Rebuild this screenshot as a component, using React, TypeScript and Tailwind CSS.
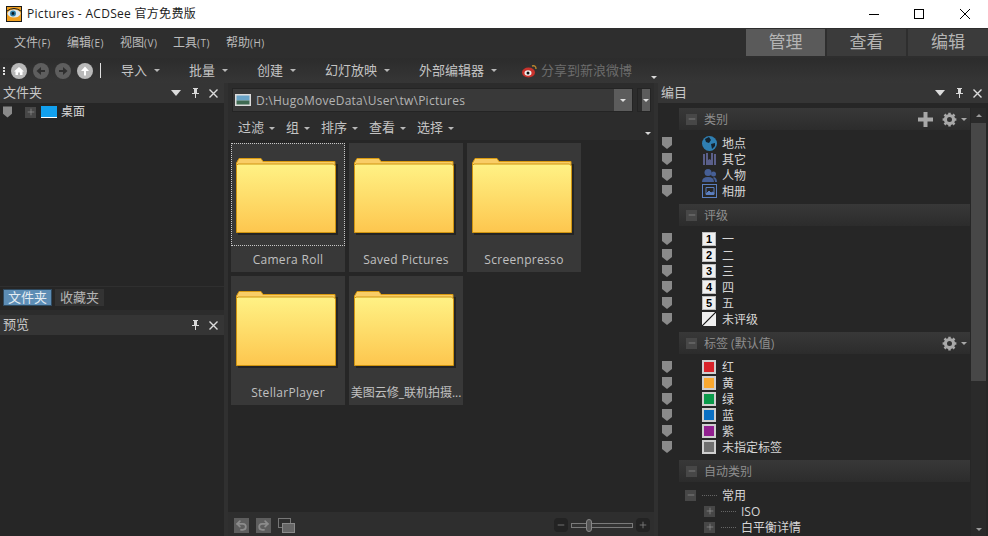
import { Minus, Plus, Redo2, Undo2 } from "lucide-react";

const font = "font-['Open_Sans','Noto_Sans_CJK_SC',sans-serif]";

function Caret({ className = "border-t-[#b8b8b8]" }: { className?: string }) {
  return <span className={`inline-block h-0 w-0 border-x-[3px] border-t-[3px] border-x-transparent ${className}`} />;
}

function PaneControls({ menu = true }: { menu?: boolean }) {
  return (
    <div className="flex items-center gap-[9px]">
      {menu && <span className="mr-px h-0 w-0 border-x-[5px] border-t-[6px] border-x-transparent border-t-[#dcdcdc]" />}
      <svg width="9" height="10" viewBox="0 0 9 10" fill="#d8d8d8">
        <path d="M2 0h5v1H6v4h2v1H5v4H4V6H1V5h2V1H2z" />
      </svg>
      <svg width="9" height="9" viewBox="0 0 9 9" stroke="#dcdcdc" strokeWidth="1.4">
        <path d="M0.500 0.500 8.500 8.500M8.500 0.500 0.500 8.500" />
      </svg>
    </div>
  );
}

function PaneHeader({ title, menu = true }: { title: string; menu?: boolean }) {
  return (
    <div className="flex h-[20px] shrink-0 items-center justify-between bg-[#353535] pl-[3px] pr-[6px] text-[13px] text-[#c8c8c8]">
      <span>{title}</span>
      <PaneControls menu={menu} />
    </div>
  );
}

function NavButton({ dim, d }: { dim?: boolean; d: string }) {
  return (
    <span className={`flex h-[16px] w-[16px] items-center justify-center rounded-full ${dim ? "bg-[#5e5e5e]" : "bg-[#b9b9b9]"}`}>
      <svg width="10" height="10" viewBox="0 0 10 10" fill={dim ? "#2f2f2f" : "#fff"}>
        <path d={d} />
      </svg>
    </span>
  );
}

function ToolItem({ label, className = "" }: { label: string; className?: string }) {
  return (
    <span className={`flex items-center gap-[7px] text-[13px] text-[#c4c4c4] ${className}`}>
      {label}
      <Caret />
    </span>
  );
}

function Folder({ label, focused, tight }: { label: string; focused?: boolean; tight?: boolean }) {
  return (
    <div className="relative flex h-[129px] w-[114px] flex-col bg-[#383838]">
      <div className={`h-[103px] border border-dotted ${focused ? "border-[#c8c8c8]" : "border-transparent"} px-[3px] pt-[13px]`}>
        <svg width="104" height="80" viewBox="0 0 104 80">
          <defs>
            <linearGradient id="folderFill" x1="0" y1="0" x2="0" y2="1">
              <stop offset="0" stopColor="#fff285" />
              <stop offset="1" stopColor="#fdc64e" />
            </linearGradient>
          </defs>
          <rect x="3" y="7" width="100" height="71" fill="#1c1c1c" opacity="0.7" />
          <path d="M1.500 6 L4 1.500 H26 L28 4.500 H100 V75 H1.500 Z" fill="#f9cd66" stroke="#d99a10" />
          <path d="M1.500 8.500 L3 7 H98.500 L100.500 9 V75.500 H1.500 Z" fill="url(#folderFill)" stroke="#cf9410" />
        </svg>
      </div>
      <div className={`flex flex-1 items-center justify-center overflow-hidden whitespace-nowrap pt-px text-[12px] text-[#c0c0c0] ${tight ? "" : "tracking-[0.3px]"}`}>
        {label}
      </div>
    </div>
  );
}

function Flag() {
  return (
    <svg width="10" height="12" viewBox="0 0 10 12" fill="#8a8a8a">
      <path d="M0 0h10v8l-5 4-5-4z" />
    </svg>
  );
}

function SmallBox({ plus, className = "" }: { plus?: boolean; className?: string }) {
  return (
    <span className={`flex h-[11px] w-[11px] shrink-0 items-center justify-center bg-[#474747] text-[#9a9a9a] ${className}`}>
      {plus ? <Plus size={10} strokeWidth={1.5} /> : <Minus size={10} strokeWidth={1.5} />}
    </span>
  );
}

function Gear() {
  return (
    <svg width="15" height="15" viewBox="0 0 24 24" fill="none" stroke="#a8a8a8">
      <circle cx="12" cy="12" r="6.500" strokeWidth="5" />
      <path d="M12 1v5M12 18v5M1 12h5M18 12h5M4 4l3.500 3.500M16.500 16.500 20 20M4 20l3.500-3.500M16.500 7.500 20 4" strokeWidth="4" />
    </svg>
  );
}

function Section({ title, add, gear }: { title: string; add?: boolean; gear?: boolean }) {
  return (
    <div className="ml-[21px] flex h-[22px] items-center bg-gradient-to-b from-[#383838] to-[#2c2c2c] pl-[7px] pr-[3px] text-[12px] text-[#8e8e8e]">
      <SmallBox />
      <span className="ml-[7px] flex-1 pt-[2px]">{title}</span>
      {add && (
        <svg width="15" height="15" viewBox="0 0 15 15" fill="#a8a8a8" className="mr-[9px]">
          <path d="M5.500 0h4v5.500H15v4H9.500V15h-4V9.500H0v-4h5.500z" />
        </svg>
      )}
      {gear && <Gear />}
      {gear && <Caret className="ml-[4px] border-t-[#a8a8a8]" />}
    </div>
  );
}

function Row({ icon, label }: { icon: React.ReactNode; label: string }) {
  return (
    <div className="flex h-[16px] items-center text-[12px] text-[#d6d6d6]">
      <span className="ml-[4px] flex w-[40px] shrink-0"><Flag /></span>
      <span className="flex w-[14px] shrink-0 items-center justify-center">{icon}</span>
      <span className="ml-[6px] pt-[2px]">{label}</span>
    </div>
  );
}

function RatingBox({ n }: { n: string }) {
  return (
    <span className="flex h-[14px] w-[14px] items-center justify-center border border-[#bdbdbd] bg-[#efefef] font-['Liberation_Sans',sans-serif] text-[11px] font-bold leading-none text-black">
      {n}
    </span>
  );
}

function ColorBox({ className }: { className: string }) {
  return <span className={`h-[14px] w-[14px] border-2 border-[#cfcfcf] ${className}`} />;
}

function TreeRow({ indent, label, plus }: { indent: string; label: string; plus?: boolean }) {
  return (
    <div className={`flex h-[16px] items-center ${indent}`}>
      <SmallBox plus={plus} />
      <span className="ml-[6px] w-[15px] border-t border-dotted border-[#666]" />
      <span className="ml-[5px] pt-[2px]">{label}</span>
    </div>
  );
}

export default function App() {
  return (
    <div className={`flex h-[536px] w-[988px] flex-col overflow-hidden bg-[#2a2a2a] ${font}`}>
      {/* title bar */}
      <div className="flex h-[28px] shrink-0 items-center bg-white pl-[6px]">
        <svg width="16" height="16" viewBox="0 0 16 16">
          <rect width="16" height="16" fill="#1a1a1a" />
          <rect x="1" y="1" width="14" height="14" fill="#f0a020" />
          <ellipse cx="8" cy="7.500" rx="6.500" ry="4" fill="#dfe8ee" />
          <circle cx="7" cy="7.500" r="3" fill="#2f7fa8" />
          <circle cx="7" cy="7.500" r="1.400" fill="#0b1a22" />
          <path d="M1 5q7-5 14 0" stroke="#1a1a1a" fill="none" />
        </svg>
        <span className="ml-[5px] flex-1 text-[12px] tracking-[0.3px] text-[#1c1c1c]">Pictures - ACDSee 官方免费版</span>
        <svg width="10" height="10" viewBox="0 0 10 10" stroke="#000" fill="none" className="mr-[35px]">
          <path d="M0 5.500h10" />
        </svg>
        <svg width="10" height="10" viewBox="0 0 10 10" stroke="#000" fill="none" className="mr-[36px]">
          <rect x="0.500" y="0.500" width="9" height="9" />
        </svg>
        <svg width="10" height="10" viewBox="0 0 10 10" stroke="#000" fill="none" className="mr-[18px]">
          <path d="M0 0 10 10M10 0 0 10" />
        </svg>
      </div>

      {/* menu bar */}
      <div className="flex h-[30px] shrink-0 items-center justify-between bg-[#2e2e2e] pl-[14px]">
        <div className="flex text-[12px] text-[#bcbcbc]">
          {["文件", "编辑", "视图", "工具", "帮助"].map((m, i) => (
            <span key={m} className="w-[53px]">
              {m}
              <span className="text-[10px] tracking-[0.5px]">({["F", "E", "V", "T", "H"][i]})</span>
            </span>
          ))}
        </div>
        <div className="flex h-[28px] gap-[2px] self-start pt-px text-[17px] text-[#b4b4b4]">
          <span className="flex w-[79px] items-center justify-center bg-[#5a5a5a] pb-[2px]">管理</span>
          <span className="flex w-[79px] items-center justify-center bg-[#3b3b3b] pb-[2px]">查看</span>
          <span className="flex w-[80px] items-center justify-center bg-[#3b3b3b] pb-[2px]">编辑</span>
        </div>
      </div>

      {/* toolbar */}
      <div className="flex h-[25px] shrink-0 items-center bg-gradient-to-b from-[#2c2c2c] to-[#363636] pl-[3px]">
        <span className="mr-[6px] flex flex-col gap-px">
          <span className="h-[2px] w-[2px] bg-[#ddd]" />
          <span className="h-[2px] w-[2px] bg-[#ddd]" />
          <span className="h-[2px] w-[2px] bg-[#ddd]" />
        </span>
        <div className="flex gap-[6px]">
          <NavButton d="M5 1 10 5.500H8.500V9H6V6.500H4V9H1.500V5.500H0Z" />
          <NavButton dim d="M5 1v3h4v2H5v3L0.500 5Z" />
          <NavButton dim d="M5 1v3H1v2h4v3l4.500-4Z" />
          <NavButton d="M1 5 5 0.500 9 5H6v4.500H4V5Z" />
        </div>
        <span className="ml-[7px] h-[15px] w-px bg-[#e0e0e0]" />
        <ToolItem label="导入" className="ml-[20px]" />
        <ToolItem label="批量" className="ml-[29px]" />
        <ToolItem label="创建" className="ml-[29px]" />
        <ToolItem label="幻灯放映" className="ml-[29px]" />
        <ToolItem label="外部编辑器" className="ml-[29px]" />
        <span className="ml-[25px] flex items-center gap-[3px] text-[13px] text-[#6c6c6c]">
          <svg width="16" height="14" viewBox="0 0 16 14">
            <ellipse cx="6.500" cy="8.500" rx="6.500" ry="5" fill="#c8322c" />
            <ellipse cx="6" cy="9" rx="3.500" ry="2.800" fill="#eee" />
            <circle cx="6" cy="9" r="1.500" fill="#111" />
            <path d="M10 2q4-1 4 3" stroke="#b8862e" strokeWidth="1.400" fill="none" />
          </svg>
          分享到新浪微博
        </span>
        <Caret className="ml-[19px] mt-[14px] border-t-[#d8d8d8]" />
      </div>

      {/* panes */}
      <div className="flex min-h-0 flex-1">
        {/* left */}
        <div className="flex w-[224px] shrink-0 flex-col bg-[#262626]">
          <PaneHeader title="文件夹" />
          <div className="flex h-[18px] items-center pl-[3px] text-[12px] text-[#d6d6d6]">
            <svg width="9" height="12" viewBox="0 0 10 12" fill="#8a8a8a">
              <path d="M0 0h10v8l-5 4-5-4z" />
            </svg>
            <SmallBox plus className="ml-[13px]" />
            <span className="ml-[5px] h-[12px] w-[16px] border-b border-b-white bg-[#12a0ee]" />
            <span className="ml-[4px]">桌面</span>
          </div>
          <div className="flex-1" />
          <div className="flex h-[24px] items-center gap-[3px] border-t border-[#2f2f2f] pb-[2px] pl-[3px] text-[13px]">
            <span className="flex h-[17px] w-[49px] items-center justify-center border border-[#2f4a60] bg-[#5d8db5] text-[#e4ecf2]">文件夹</span>
            <span className="flex h-[17px] w-[49px] items-center justify-center bg-[#333] text-[#b4b4b4]">收藏夹</span>
          </div>
          <div className="h-[5px] bg-[#2c2c2c]" />
          <PaneHeader title="预览" menu={false} />
          <div className="h-[201px]" />
        </div>

        <div className="w-[4px] shrink-0 bg-[#303030]" />

        {/* center */}
        <div className="flex w-[426px] shrink-0 flex-col bg-[#262626]">
          <div className="h-[5px] bg-[#2c2c2c]" />
          <div className="flex h-[24px] shrink-0 items-stretch gap-[4px] bg-[#2c2c2c] pl-[4px] pr-[3px]">
            <div className="flex flex-1 items-center border border-[#242424] bg-[#393939]">
              <svg width="16" height="12" viewBox="0 0 16 12" className="ml-[2px]">
                <rect width="16" height="12" fill="#ddd" />
                <rect x="1.500" y="1.500" width="13" height="5" fill="#6aa4c8" />
                <rect x="1.500" y="6.500" width="13" height="4" fill="#3f6a52" />
              </svg>
              <span className="ml-[5px] flex-1 pt-[2px] text-[12px] tracking-[0.25px] text-[#b4b4b4]">D:\HugoMoveData\User\tw\Pictures</span>
              <span className="flex h-full w-[18px] items-center justify-center bg-[#5c5c5c]">
                <Caret className="border-t-[#e0e0e0]" />
              </span>
            </div>
            <div className="flex w-[14px] justify-end border border-[#242424] bg-[#2c2c2c]">
              <span className="flex w-[8px] items-center justify-center bg-[#5c5c5c]">
                <Caret className="border-t-[#e0e0e0]" />
              </span>
            </div>
          </div>
          <div className="flex h-[28px] shrink-0 items-center gap-[11px] bg-[#2c2c2c] pl-[10px] pt-[4px] text-[13px] text-[#c4c4c4]">
            {["过滤", "组", "排序", "查看", "选择"].map((t) => (
              <span key={t} className="flex items-center gap-[5px]">
                {t}
                <Caret />
              </span>
            ))}
            <Caret className="ml-auto mr-[3px] mt-[10px] border-t-[#d8d8d8]" />
          </div>
          <div className="flex flex-1 flex-wrap content-start gap-x-[4px] gap-y-[4px] pl-[3px] pt-[3px]">
            <Folder label="Camera Roll" focused />
            <Folder label="Saved Pictures" />
            <Folder label="Screenpresso" />
            <Folder label="StellarPlayer" />
            <Folder label="美图云修_联机拍摄..." tight />
          </div>
          <div className="flex h-[24px] shrink-0 items-center bg-[#2e2e2e] pl-[6px] pr-[4px] pt-[2px]">
            <span className="flex h-[15px] w-[15px] items-center justify-center bg-[#5e5e5e] text-[#8c8c8c]">
              <Undo2 size={13} strokeWidth={3.2} />
            </span>
            <span className="ml-[7px] flex h-[15px] w-[15px] items-center justify-center bg-[#5e5e5e] text-[#8c8c8c]">
              <Redo2 size={13} strokeWidth={3.2} />
            </span>
            <span className="relative ml-[7px] h-[15px] w-[17px]">
              <span className="absolute left-0 top-0 h-[10px] w-[13px] border border-[#777]" />
              <span className="absolute bottom-0 right-0 h-[10px] w-[13px] border border-[#8a8a8a] bg-[#666]" />
            </span>
            <span className="ml-auto flex h-[14px] w-[14px] items-center justify-center rounded-sm bg-[#232323] text-[#808080]">
              <Minus size={10} />
            </span>
            <span className="relative mx-[3px] h-[5px] w-[62px] border border-[#7a7a7a] bg-[#333]">
              <span className="absolute left-[14px] top-[-5px] h-[13px] w-[6px] rounded-sm border border-[#888] bg-[#555]" />
            </span>
            <span className="flex h-[14px] w-[14px] items-center justify-center rounded-sm bg-[#232323] text-[#808080]">
              <Plus size={10} />
            </span>
          </div>
        </div>

        <div className="w-[4px] shrink-0 bg-[#303030]" />

        {/* right */}
        <div className="flex min-w-0 flex-1 flex-col bg-[#262626]">
          <PaneHeader title="编目" />
          <div className="flex min-h-0 flex-1 pt-[5px]">
            <div className="min-w-0 flex-1 overflow-hidden">
              <Section title="类别" add gear />
              <div className="py-[5px]">
                <Row label="地点" icon={
                  <svg width="15" height="15" viewBox="0 0 15 15" className="shrink-0">
                    <circle cx="7.500" cy="7.500" r="7.500" fill="#2f7fb2" />
                    <path d="M3 3l4-2 2 3-2 3-3-1zM9 8l4-1 0 3-3 3z" fill="#14232e" />
                  </svg>
                } />
                <Row label="其它" icon={
                  <svg width="13" height="13" viewBox="0 0 13 13" fill="#5a5f8a" className="shrink-0">
                    <path d="M0 1h2v11H0zM3 0h7v12H3zM11 1h2v11h-2z" />
                    <path d="M5 0h3v7l-1.500-1L5 7z" fill="#262626" />
                  </svg>
                } />
                <Row label="人物" icon={
                  <svg width="15" height="13" viewBox="0 0 15 13" fill="#465f96" className="shrink-0">
                    <circle cx="6" cy="3.500" r="3.500" />
                    <circle cx="11.500" cy="5" r="2.500" />
                    <path d="M0 13q0-5 6-5t6 5zM12 8q3 1 3 5h-2q0-3-2-4z" />
                  </svg>
                } />
                <Row label="相册" icon={
                  <svg width="15" height="14" viewBox="0 0 15 14" fill="none" stroke="#5b7fc0" className="shrink-0">
                    <rect x="0.500" y="0.500" width="14" height="13" />
                    <path d="M4 3.500h8v7H4z" />
                    <path d="M4 10l3-3 2 2 2-1 1 2z" fill="#5b7fc0" />
                  </svg>
                } />
              </div>
              <Section title="评级" />
              <div className="py-[5px]">
                <Row label="一" icon={<RatingBox n="1" />} />
                <Row label="二" icon={<RatingBox n="2" />} />
                <Row label="三" icon={<RatingBox n="3" />} />
                <Row label="四" icon={<RatingBox n="4" />} />
                <Row label="五" icon={<RatingBox n="5" />} />
                <Row label="未评级" icon={
                  <svg width="14" height="14" viewBox="0 0 14 14" className="shrink-0">
                    <rect width="14" height="14" fill="#efefef" />
                    <path d="M0 14 14 0" stroke="#111" strokeWidth="1.200" />
                  </svg>
                } />
              </div>
              <Section title="标签 (默认值)" gear />
              <div className="py-[5px]">
                <Row label="红" icon={<ColorBox className="bg-[#d8232a]" />} />
                <Row label="黄" icon={<ColorBox className="bg-[#f9a82f]" />} />
                <Row label="绿" icon={<ColorBox className="bg-[#0a9a4a]" />} />
                <Row label="蓝" icon={<ColorBox className="bg-[#0a70c4]" />} />
                <Row label="紫" icon={<ColorBox className="bg-[#922090]" />} />
                <Row label="未指定标签" icon={<ColorBox className="bg-[#707070]" />} />
              </div>
              <Section title="自动类别" />
              <div className="pt-[5px] text-[12px] text-[#d6d6d6]">
                <TreeRow indent="pl-[27px]" label="常用" />
                <TreeRow indent="pl-[46px]" label="ISO" plus />
                <TreeRow indent="pl-[46px]" label="白平衡详情" plus />
              </div>
            </div>
            <div className="ml-px mr-[2px] flex w-[15px] shrink-0 flex-col items-center bg-[#2a2a2a]">
              <span className="flex h-[15px] items-center">
                <span className="h-0 w-0 border-x-[3px] border-b-[3px] border-x-transparent border-b-[#9a9a9a]" />
              </span>
              <span className="h-[258px] w-full bg-[#474747]" />
              <Caret className="mb-[5px] mt-auto border-t-[#9a9a9a]" />
            </div>
          </div>
        </div>
      </div>
    </div>
  );
}
